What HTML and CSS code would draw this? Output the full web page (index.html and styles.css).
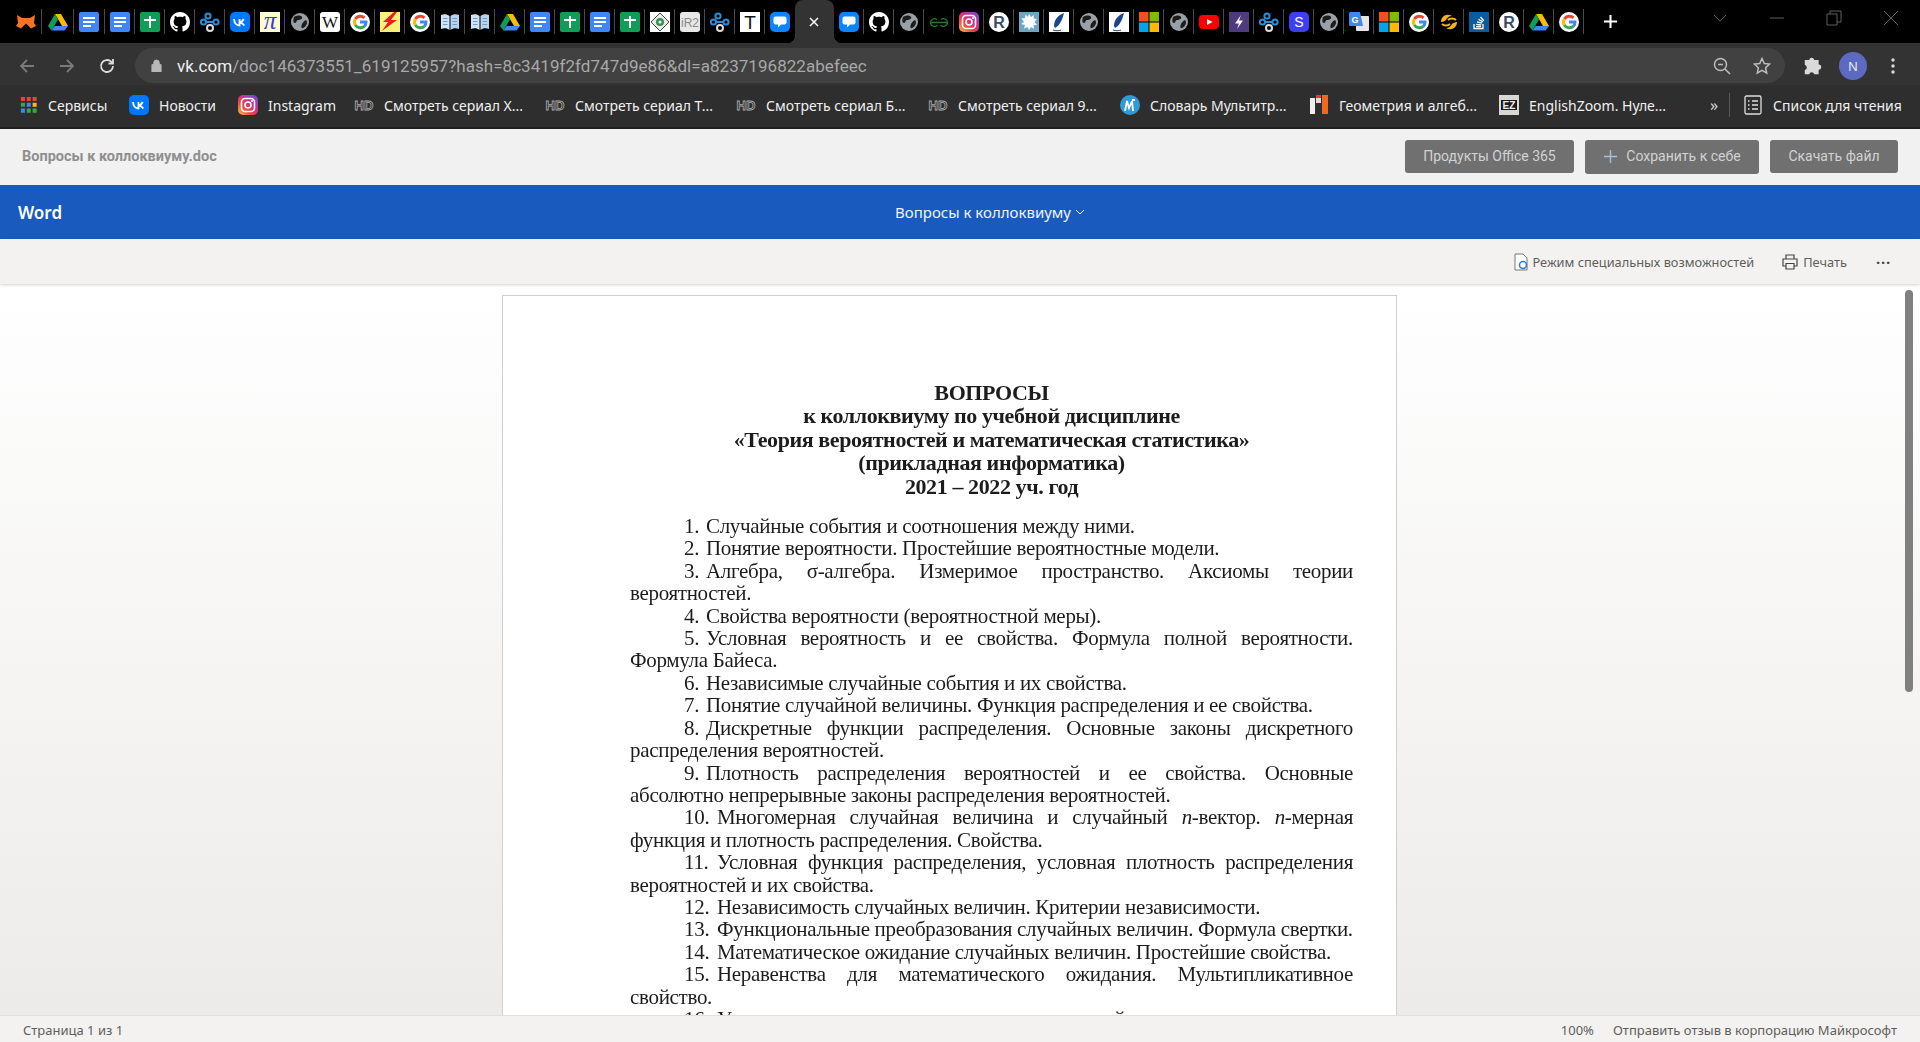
FILE: index.html
```html
<!DOCTYPE html>
<html lang="ru">
<head>
<meta charset="utf-8">
<title>Вопросы к коллоквиуму.doc</title>
<link rel="stylesheet" href="styles.css">
</head>
<body>
<svg class="defs" width="0" height="0" aria-hidden="true">
  <defs>
    <linearGradient id="ig" x1="0" y1="1" x2="1" y2="0">
      <stop offset="0" stop-color="#fdc04f"/><stop offset=".35" stop-color="#f0443e"/><stop offset=".65" stop-color="#c62f9b"/><stop offset="1" stop-color="#5a55d6"/>
    </linearGradient>
    <symbol id="fox" viewBox="0 0 20 20"><path d="M1 3l5 3h8l5-3-1 8 2 3-5 2.500-2.500-2.500h-5L5 16.500 0 14l2-3z" fill="#f5761a"/><path d="M7.500 14L10 11.500l2.500 2.500z" fill="#000"/></symbol>
    <symbol id="drive" viewBox="0 0 20 20"><path d="M7 2h6l7 12h-6z" fill="#fbbc04"/><path d="M7 2l3 5.500L3.500 18.500 0 14z" fill="#0f9d58"/><path d="M6.500 14H20l-3.500 4.500h-13z" fill="#4285f4"/></symbol>
    <symbol id="doc" viewBox="0 0 20 20"><rect width="20" height="20" rx="2" fill="#4285f4"/><path d="M4 5h12v2H4zM4 9h12v2H4zM4 13h8v2H4z" fill="#fff"/></symbol>
    <symbol id="sheet" viewBox="0 0 20 20"><rect width="20" height="20" rx="2" fill="#0f9d58"/><path d="M4 7h12v2H4zM9 4h2v12H9z" fill="#fff"/></symbol>
    <symbol id="github" viewBox="0 0 16 16"><path fill="#fff" d="M8 0C3.58 0 0 3.58 0 8c0 3.540 2.290 6.530 5.470 7.590.4.070.55-.17.55-.38 0-.19-.01-.82-.01-1.490-2.010.37-2.530-.49-2.690-.94-.09-.23-.48-.94-.82-1.130-.28-.15-.68-.52-.01-.53.63-.01 1.080.58 1.230.82.72 1.210 1.870.87 2.330.66.07-.52.28-.87.51-1.070-1.780-.2-3.640-.89-3.640-3.950 0-.87.31-1.590.82-2.150-.08-.2-.36-1.020.08-2.120 0 0 .67-.21 2.200.82.64-.18 1.320-.27 2-.27.68 0 1.360.09 2 .27 1.530-1.040 2.200-.82 2.200-.82.44 1.100.16 1.920.08 2.120.51.56.82 1.270.82 2.150 0 3.070-1.870 3.750-3.650 3.950.29.25.54.73.54 1.480 0 1.070-.01 1.930-.01 2.200 0 .21.15.46.55.38A8.013 8.013 0 0016 8c0-4.420-3.580-8-8-8z"/></symbol>
    <symbol id="links" viewBox="0 0 20 20"><g fill="none" stroke-width="2"><circle cx="8" cy="4" r="2.600" stroke="#2a8fd8"/><circle cx="3.500" cy="10" r="2.600" stroke="#2a8fd8"/><circle cx="16" cy="10" r="2.600" stroke="#2a8fd8"/><path d="M6 10h7.500" stroke="#2a8fd8"/><circle cx="10" cy="16" r="3" stroke="#ddd"/></g></symbol>
    <symbol id="vk" viewBox="0 0 20 20"><rect width="20" height="20" rx="5" fill="#0077ff"/><path d="M4 7c.3 4 2.500 6.500 5.500 6.500V7M9.500 10.300c1.700 0 3.300-1.500 4.200-3.300M9.500 10.300c1.800.2 3.600 1.500 4.800 3.200" fill="none" stroke="#fff" stroke-width="1.800"/></symbol>
    <symbol id="pi" viewBox="0 0 20 20"><rect width="20" height="20" fill="#fdfbd0"/><text x="10" y="17" text-anchor="middle" font-family="Liberation Serif" font-style="italic" font-size="25" fill="#3b3bd8">π</text></symbol>
    <symbol id="globe" viewBox="0 0 20 20"><circle cx="10" cy="10" r="9" fill="#9aa0a6"/><path d="M4 5c3-2 7-2 8 0s-2 3-4 3-1 3-3 3-2-3-1-6zM16 8c2 2 1 6-3 8-2 1-2-2-1-4s2-3 4-4z" fill="#1c1c1c"/></symbol>
    <symbol id="wiki" viewBox="0 0 20 20"><rect width="20" height="20" rx="3" fill="#fff"/><text x="10" y="15.500" text-anchor="middle" font-family="Liberation Serif" font-size="17" fill="#111">W</text></symbol>
    <symbol id="google" viewBox="0 0 20 20"><circle cx="10" cy="10" r="10" fill="#fff"/><g fill="none" stroke-width="3"><path d="M14.500 5.800A6 6 0 0 0 5.300 7" stroke="#ea4335"/><path d="M5.300 7a6 6 0 0 0 0 6" stroke="#fbbc05"/><path d="M5.300 13a6 6 0 0 0 9.200 1.200" stroke="#34a853"/><path d="M14.500 14.200A6 6 0 0 0 16 10H10" stroke="#4285f4"/></g></symbol>
    <symbol id="bolt" viewBox="0 0 20 20"><rect width="20" height="20" fill="#fbf27a"/><path d="M14 0L3 10h5l-6 9 15-11h-6l6-8z" fill="#ee1c25"/></symbol>
    <symbol id="book" viewBox="0 0 20 20"><path d="M1 3c3-1 6-1 8.500 1v14C7 16 4 16 1 17z" fill="#cfe4f7"/><path d="M19 3c-3-1-6-1-8.500 1v14c2.500-2 5.500-2 8.500-1z" fill="#b5d4ef"/><path d="M3 6.500h4.500M3 9.500h4.500M3 12.500h4.500M12.500 6.500H17M12.500 9.500H17M12.500 12.500H17" stroke="#6e9cc6"/></symbol>
    <symbol id="seal" viewBox="0 0 20 20"><rect width="20" height="20" fill="#fff"/><path d="M10 1l9 9-9 9-9-9z" fill="#e8efe8" stroke="#444"/><circle cx="10" cy="10" r="4" fill="#3c8f52"/><circle cx="10" cy="10" r="1.600" fill="#e8efe8"/></symbol>
    <symbol id="ir2" viewBox="0 0 20 20"><rect width="20" height="20" rx="3" fill="#e8e8e8"/><text x="10" y="15" text-anchor="middle" font-family="Liberation Sans" font-size="12" fill="#888">iR2</text></symbol>
    <symbol id="tt" viewBox="0 0 20 20"><rect width="20" height="20" fill="#fff"/><text x="10" y="17" text-anchor="middle" font-family="Liberation Sans" font-size="19" fill="#111">T</text></symbol>
    <symbol id="chat" viewBox="0 0 20 20"><rect width="20" height="20" rx="5" fill="#0a84ff"/><path d="M5.500 4.500h9a2 2 0 0 1 2 2v4a2 2 0 0 1-2 2h-3.500L8 15.500v-3H5.500a2 2 0 0 1-2-2v-4a2 2 0 0 1 2-2z" fill="#fff"/></symbol>
    <symbol id="gfg" viewBox="0 0 20 20"><path d="M10 10.500H1.500a4 4 0 0 1 6.500-3M10 10.500h8.500a4 4 0 0 0-6.500-3M1.500 10.500a4 4 0 0 0 7 2.500M18.500 10.500a4 4 0 0 1-7 2.500" fill="none" stroke="#1f7a34" stroke-width="1.300"/></symbol>
    <symbol id="insta" viewBox="0 0 20 20"><rect width="20" height="20" rx="5" fill="url(#ig)"/><rect x="3.500" y="3.500" width="13" height="13" rx="3.500" fill="none" stroke="#fff" stroke-width="1.600"/><circle cx="10" cy="10" r="3" fill="none" stroke="#fff" stroke-width="1.600"/><circle cx="14" cy="6" r="1" fill="#fff"/></symbol>
    <symbol id="rr" viewBox="0 0 20 20"><circle cx="10" cy="10" r="10" fill="#fff"/><text x="10" y="16" text-anchor="middle" font-family="Liberation Sans" font-weight="700" font-size="16" fill="#3b4a66">R</text></symbol>
    <symbol id="splash" viewBox="0 0 20 20"><rect width="20" height="20" fill="#6fa6c4"/><path d="M10 2l2 3 3-2-.5 3.500L18 7l-2.500 3 2.500 3-3.500.3.500 3.700-3-2-2 3-1.500-3-3.500 1.500 1-3.500L2 12l3-2-2.500-3.500L6 6l.5-3.500L9 5z" fill="#fff"/></symbol>
    <symbol id="quill" viewBox="0 0 20 20"><rect width="20" height="20" fill="#fff"/><path d="M15 1C9 3 5 8 5 14l1 2c4-2 7-7 9-15z" fill="#1c4587"/><path d="M4 18c2 1 6 1 8 0" fill="none" stroke="#1c4587"/></symbol>
    <symbol id="ms" viewBox="0 0 20 20"><path fill="#f25022" d="M0 0h9.500v9.500H0z"/><path fill="#7fba00" d="M10.500 0H20v9.500h-9.500z"/><path fill="#00a4ef" d="M0 10.500h9.500V20H0z"/><path fill="#ffb900" d="M10.500 10.500H20V20h-9.500z"/></symbol>
    <symbol id="yt" viewBox="0 0 20 20"><rect y="3" width="20" height="14" rx="4" fill="#f00"/><path d="M8 7l5.500 3L8 13z" fill="#fff"/></symbol>
    <symbol id="spark" viewBox="0 0 20 20"><rect width="20" height="20" fill="#4f3a7e"/><path d="M12 3l-6 8.500h4L8 17l6-8.500h-4z" fill="#fff"/></symbol>
    <symbol id="ss" viewBox="0 0 20 20"><rect width="20" height="20" rx="5" fill="#3f3ff2"/><text x="10" y="15" text-anchor="middle" font-family="Liberation Sans" font-size="14" fill="#fff">S</text></symbol>
    <symbol id="trans" viewBox="0 0 20 20"><rect x="7" y="4" width="13" height="15" rx="1" fill="#e6e6e6"/><path d="M0 1.500A1.500 1.500 0 0 1 1.500 0H11l3 14H1.500A1.500 1.500 0 0 1 0 12.500z" fill="#4285f4"/><text x="6" y="10.500" text-anchor="middle" font-family="Liberation Sans" font-weight="700" font-size="9" fill="#fff">G</text></symbol>
    <symbol id="swirl" viewBox="0 0 20 20"><path d="M2 10C2 4 8 1 13 4c-3 0-5 2-6 4-1 1-3 2-5 2zM18 10c0 6-6 9-11 6 3 0 5-2 6-4 1-1 3-2 5-2z" fill="#f5b320"/><path d="M9 8c2-2 6-2 8 0M3 12c2 2 6 2 8 0" stroke="#f5b320" stroke-width="2" fill="none"/></symbol>
    <symbol id="stack" viewBox="0 0 20 20"><rect width="20" height="20" fill="#0b5c9e"/><path d="M5 12v4.500h9V12" fill="none" stroke="#fff" stroke-width="1.300"/><path d="M7 14.700h5M7.200 12.400l5 .6M8 9.800l4.900 1.300M9.500 7.300l4.300 2.600M11.500 5l3.300 3.700" stroke="#fff" stroke-width="1.300"/></symbol>
    <symbol id="apps" viewBox="0 0 20 20"><path fill="#ea4335" d="M1 1h4.500v4.500H1zM7.500 1H12v4.500H7.500zM14 1h4.500v4.500H14z"/><path fill="#fbbc05" d="M14 7.500h4.500V12H14z"/><path fill="#34a853" d="M1 7.500h4.500V12H1zM7.500 14H12v4.500H7.500zM14 14h4.500v4.500H14z"/><path fill="#4285f4" d="M7.500 7.500H12V12H7.500zM1 14h4.500v4.500H1z"/></symbol>
    <symbol id="hd" viewBox="0 0 20 20"><text x="10" y="15" text-anchor="middle" font-family="Liberation Sans" font-weight="700" font-size="13" fill="#2d2d2d" stroke="#aaa" stroke-width=".8">HD</text></symbol>
    <symbol id="multitran" viewBox="0 0 20 20"><circle cx="10" cy="10" r="10" fill="#2d9bd8"/><path d="M5 16l2-10 2 7 3-7 1 10M12 5l3 0" fill="none" stroke="#fff" stroke-width="1.800"/></symbol>
    <symbol id="geom" viewBox="0 0 20 20"><rect x="1" y="3" width="5" height="16" fill="#eee"/><rect x="7" y="3" width="5" height="5" fill="#ddd"/><rect x="13" y="0" width="6" height="19" fill="#ef6a20"/><rect x="7" y="0" width="5" height="3" fill="#e33"/></symbol>
    <symbol id="ez" viewBox="0 0 20 20"><rect width="20" height="20" fill="#d9d9d4"/><rect x="2" y="5" width="16" height="10" fill="#1a1a1a"/><text x="10" y="14" text-anchor="middle" font-family="Liberation Sans" font-weight="700" font-size="10" fill="#eee">EZ</text></symbol>
  </defs>
</svg>

<div class="tabstrip">
  <div class="tab tab-a"><svg class="ico"><use href="#fox"/></svg></div>
  <div class="tab tab-a"><svg class="ico"><use href="#drive"/></svg></div>
  <div class="tab tab-b"><svg class="ico"><use href="#doc"/></svg></div>
  <div class="tab"><svg class="ico"><use href="#doc"/></svg></div>
  <div class="tab"><svg class="ico"><use href="#sheet"/></svg></div>
  <div class="tab"><svg class="ico"><use href="#github"/></svg></div>
  <div class="tab"><svg class="ico"><use href="#links"/></svg></div>
  <div class="tab"><svg class="ico"><use href="#vk"/></svg></div>
  <div class="tab"><svg class="ico"><use href="#pi"/></svg></div>
  <div class="tab"><svg class="ico"><use href="#globe"/></svg></div>
  <div class="tab"><svg class="ico"><use href="#wiki"/></svg></div>
  <div class="tab"><svg class="ico"><use href="#google"/></svg></div>
  <div class="tab"><svg class="ico"><use href="#bolt"/></svg></div>
  <div class="tab"><svg class="ico"><use href="#google"/></svg></div>
  <div class="tab"><svg class="ico"><use href="#book"/></svg></div>
  <div class="tab"><svg class="ico"><use href="#book"/></svg></div>
  <div class="tab"><svg class="ico"><use href="#drive"/></svg></div>
  <div class="tab"><svg class="ico"><use href="#doc"/></svg></div>
  <div class="tab"><svg class="ico"><use href="#sheet"/></svg></div>
  <div class="tab"><svg class="ico"><use href="#doc"/></svg></div>
  <div class="tab"><svg class="ico"><use href="#sheet"/></svg></div>
  <div class="tab"><svg class="ico"><use href="#seal"/></svg></div>
  <div class="tab"><svg class="ico"><use href="#ir2"/></svg></div>
  <div class="tab"><svg class="ico"><use href="#links"/></svg></div>
  <div class="tab"><svg class="ico"><use href="#tt"/></svg></div>
  <div class="tab tab-plain"><svg class="ico"><use href="#chat"/></svg></div>
  <div class="tab-active"><svg class="close" viewBox="0 0 12 12"><path d="M2 2l8 8M10 2l-8 8"/></svg></div>
  <div class="tab"><svg class="ico"><use href="#chat"/></svg></div>
  <div class="tab"><svg class="ico"><use href="#github"/></svg></div>
  <div class="tab"><svg class="ico"><use href="#globe"/></svg></div>
  <div class="tab"><svg class="ico"><use href="#gfg"/></svg></div>
  <div class="tab"><svg class="ico"><use href="#insta"/></svg></div>
  <div class="tab"><svg class="ico"><use href="#rr"/></svg></div>
  <div class="tab"><svg class="ico"><use href="#splash"/></svg></div>
  <div class="tab"><svg class="ico"><use href="#quill"/></svg></div>
  <div class="tab"><svg class="ico"><use href="#globe"/></svg></div>
  <div class="tab"><svg class="ico"><use href="#quill"/></svg></div>
  <div class="tab"><svg class="ico"><use href="#ms"/></svg></div>
  <div class="tab"><svg class="ico"><use href="#globe"/></svg></div>
  <div class="tab"><svg class="ico"><use href="#yt"/></svg></div>
  <div class="tab"><svg class="ico"><use href="#spark"/></svg></div>
  <div class="tab"><svg class="ico"><use href="#links"/></svg></div>
  <div class="tab"><svg class="ico"><use href="#ss"/></svg></div>
  <div class="tab"><svg class="ico"><use href="#globe"/></svg></div>
  <div class="tab"><svg class="ico"><use href="#trans"/></svg></div>
  <div class="tab"><svg class="ico"><use href="#ms"/></svg></div>
  <div class="tab"><svg class="ico"><use href="#google"/></svg></div>
  <div class="tab"><svg class="ico"><use href="#swirl"/></svg></div>
  <div class="tab"><svg class="ico"><use href="#stack"/></svg></div>
  <div class="tab"><svg class="ico"><use href="#rr"/></svg></div>
  <div class="tab"><svg class="ico"><use href="#drive"/></svg></div>
  <div class="tab"><svg class="ico"><use href="#google"/></svg></div>
  <svg class="newtab" viewBox="0 0 16 16"><path d="M8 1v14M1 8h14"/></svg>
  <div class="winctl">
    <svg class="win" viewBox="0 0 16 16"><path d="M2 5l6 6 6-6"/></svg>
    <svg class="win" viewBox="0 0 16 16"><path d="M1 8h14"/></svg>
    <svg class="win" viewBox="0 0 16 16"><path d="M1 4h10v11H1zM4 4V1h11v11h-4"/></svg>
    <svg class="win" viewBox="0 0 16 16"><path d="M1 1l14 14M15 1L1 15"/></svg>
  </div>
</div>

<div class="toolbar">
  <div class="navbtn"><svg class="navico dim" viewBox="0 0 16 16"><path d="M15 8H2M8 2L2 8l6 6"/></svg></div>
  <div class="navbtn"><svg class="navico dim" viewBox="0 0 16 16"><path d="M1 8h13M8 2l6 6-6 6"/></svg></div>
  <div class="navbtn"><svg class="navico" viewBox="0 0 16 16"><path d="M14 8a6 6 0 1 1-1.800-4.300L14 5.500M14 1v4.500H9.500"/></svg></div>
  <div class="omnibox">
    <svg class="lock" viewBox="0 0 12 14"><path d="M1 6h10v8H1zM3 6V4a3 3 0 0 1 6 0v2" /></svg>
    <span class="url"><span class="host">vk.com</span>/doc146373551_619125957?hash=8c3419f2fd747d9e86&amp;dl=a8237196822abefeec</span>
    <svg class="omni-ico" viewBox="0 0 18 18"><circle cx="7.500" cy="7.500" r="6"/><path d="M12 12l5 5M5 7.500h5"/></svg>
    <svg class="omni-ico star" viewBox="0 0 18 18"><path d="M9 1.500l2.300 5 5.200.6-3.900 3.600 1.100 5.300L9 13.300 4.300 16l1.100-5.300L1.500 7.100l5.200-.6z"/></svg>
  </div>
  <div class="navbtn"><svg class="puzzle" viewBox="0 0 18 18"><path d="M6.500 3.500a2.300 2.300 0 0 1 4.500 0h4v4.200a2.300 2.300 0 0 1 0 4.600V16.500H11a2.300 2.300 0 0 0-4.500 0H2.500v-4a2.300 2.300 0 0 0 0-4.500v-4.500z"/></svg></div>
  <div class="navbtn"><span class="avatar">N</span></div>
  <div class="navbtn"><svg class="kebab" viewBox="0 0 4 16"><circle cx="2" cy="2" r="1.700"/><circle cx="2" cy="8" r="1.700"/><circle cx="2" cy="14" r="1.700"/></svg></div>
</div>

<div class="bookmarks">
  <div class="bm"><svg class="ico ico-sm"><use href="#apps"/></svg><span>Сервисы</span></div>
  <div class="bm"><svg class="ico"><use href="#vk"/></svg><span>Новости</span></div>
  <div class="bm"><svg class="ico"><use href="#insta"/></svg><span>Instagram</span></div>
  <div class="bm"><svg class="ico"><use href="#hd"/></svg><span>Смотреть сериал Х...</span></div>
  <div class="bm"><svg class="ico"><use href="#hd"/></svg><span>Смотреть сериал Т...</span></div>
  <div class="bm"><svg class="ico"><use href="#hd"/></svg><span>Смотреть сериал Б...</span></div>
  <div class="bm"><svg class="ico"><use href="#hd"/></svg><span>Смотреть сериал 9...</span></div>
  <div class="bm"><svg class="ico"><use href="#multitran"/></svg><span>Словарь Мультитр...</span></div>
  <div class="bm"><svg class="ico"><use href="#geom"/></svg><span>Геометрия и алгеб...</span></div>
  <div class="bm"><svg class="ico"><use href="#ez"/></svg><span>EnglishZoom. Нуле...</span></div>
  <div class="more">»</div>
  <div class="readlist"><svg class="listico" viewBox="0 0 18 20"><rect x="1" y="1" width="16" height="18" rx="1.500"/><path d="M4 6h1.500M8 6h6M4 10h1.500M8 10h6M4 14h1.500M8 14h6"/></svg><span>Список для чтения</span></div>
</div>

<div class="docbar">
  <div class="docname">Вопросы к коллоквиуму.doc</div>
  <div class="docbtns">
    <div class="btn btn-office">Продукты Office 365</div>
    <div class="btn btn-save"><svg class="plus" viewBox="0 0 16 16"><path d="M8 1v14M1 8h14"/></svg>Сохранить к себе</div>
    <div class="btn btn-dl">Скачать файл</div>
  </div>
</div>

<div class="wordbar">
  <div class="wordlogo">Word</div>
  <div class="wordtitle">Вопросы к коллоквиуму<svg class="chev" viewBox="0 0 12 12"><path d="M2 4l4 4 4-4"/></svg></div>
</div>

<div class="wordtools">
  <div class="wt"><svg class="wt-acc" viewBox="0 0 14 18"><path d="M1 1h8l4 4v12H1z"/><circle cx="9" cy="12" r="3.500" class="acc"/></svg><span>Режим специальных возможностей</span></div>
  <div class="wt wt-print"><svg class="wt-prn" viewBox="0 0 16 16"><path d="M4 5V1h8v4M4 12H1V5h14v7h-3M4 9.500h8V15H4z"/></svg><span>Печать</span></div>
  <div class="dots">···</div>
</div>

<div class="viewer">
  <div class="page">
    <div class="title">
      <div>ВОПРОСЫ</div>
      <div>к коллоквиуму по учебной дисциплине</div>
      <div>«Теория вероятностей и математическая статистика»</div>
      <div>(прикладная информатика)</div>
      <div>2021 – 2022 уч. год</div>
    </div>
    <p class="q"><span class="n">1.</span>Случайные события и соотношения между ними.</p>
    <p class="q"><span class="n">2.</span>Понятие вероятности. Простейшие вероятностные модели.</p>
    <p class="q"><span class="j"><span class="n">3.</span>Алгебра, σ-алгебра. Измеримое пространство. Аксиомы теории</span><span class="c">вероятностей.</span></p>
    <p class="q"><span class="n">4.</span>Свойства вероятности (вероятностной меры).</p>
    <p class="q"><span class="j"><span class="n">5.</span>Условная вероятность и ее свойства. Формула полной вероятности.</span><span class="c">Формула Байеса.</span></p>
    <p class="q"><span class="n">6.</span>Независимые случайные события и их свойства.</p>
    <p class="q"><span class="n">7.</span>Понятие случайной величины. Функция распределения и ее свойства.</p>
    <p class="q"><span class="j"><span class="n">8.</span>Дискретные функции распределения. Основные законы дискретного</span><span class="c">распределения вероятностей.</span></p>
    <p class="q"><span class="j"><span class="n">9.</span>Плотность распределения вероятностей и ее свойства. Основные</span><span class="c">абсолютно непрерывные законы распределения вероятностей.</span></p>
    <p class="q"><span class="j"><span class="n n2">10.</span>Многомерная случайная величина и случайный <i>n</i>-вектор. <i>n</i>-мерная</span><span class="c">функция и плотность распределения. Свойства.</span></p>
    <p class="q"><span class="j"><span class="n n2">11.</span>Условная функция распределения, условная плотность распределения</span><span class="c">вероятностей и их свойства.</span></p>
    <p class="q"><span class="n n2">12.</span>Независимость случайных величин. Критерии независимости.</p>
    <p class="q"><span class="n n2">13.</span>Функциональные преобразования случайных величин. Формула свертки.</p>
    <p class="q"><span class="n n2">14.</span>Математическое ожидание случайных величин. Простейшие свойства.</p>
    <p class="q"><span class="j"><span class="n n2">15.</span>Неравенства для математического ожидания. Мультипликативное</span><span class="c">свойство.</span></p>
    <p class="q q-last"><span class="n n2">16.</span>Условное математическое ожидание случайных величин.</p>
  </div>
  <div class="thumb"></div>
</div>

<div class="status">
  <div>Страница 1 из 1</div>
  <div class="status-right"><span>100%</span><span>Отправить отзыв в корпорацию Майкрософт</span></div>
</div>
</body>
</html>
```
FILE: styles.css
```css
* { box-sizing: border-box; }
html, body { margin: 0; padding: 0; }
body {
  width: 1920px;
  height: 1042px;
  overflow: hidden;
  display: flex;
  flex-direction: column;
  font-family: "Noto Sans", sans-serif;
  background: #fff;
}
.defs { display: block; height: 0; }
.ico { width: 20px; height: 20px; flex: none; display: block; }
.ico-sm { width: 18px; height: 18px; }

/* Tab strip */
.tabstrip {
  height: 43px;
  flex: none;
  background: #000;
  display: flex;
  align-items: flex-start;
  padding-left: 10px;
}
.tab {
  width: 30px;
  height: 25px;
  margin-top: 9px;
  flex: none;
  display: flex;
  align-items: center;
  justify-content: center;
  border-right: 1px solid #4a4a4a;
}
.tab-a { width: 32px; }
.tab-b { width: 31px; }
.tab-plain { border-right: 0; }
.tab-active {
  width: 39px;
  height: 43px;
  flex: none;
  position: relative;
  background: #333;
  border-radius: 8px 8px 0 0;
  display: flex;
  align-items: center;
  justify-content: center;
  padding-right: 2px;
}
.tab-active::before,
.tab-active::after {
  content: "";
  position: absolute;
  bottom: 0;
  width: 8px;
  height: 8px;
}
.tab-active::before { left: -8px; background: radial-gradient(circle at 0 0, transparent 8px, #333 8.5px); }
.tab-active::after { right: -8px; background: radial-gradient(circle at 100% 0, transparent 8px, #333 8.5px); }
.close { width: 12px; height: 12px; fill: none; stroke: #fff; stroke-width: 1.500; }
.newtab { width: 15px; height: 15px; margin: 14px 0 0 19px; fill: none; stroke: #fff; stroke-width: 2.200; flex: none; }
.winctl { margin-left: auto; display: flex; padding: 10px 21px 0 0; gap: 41px; }
.win { width: 16px; height: 16px; fill: none; stroke: #5f5f5f; stroke-width: 1; }

/* Toolbar */
.toolbar {
  height: 42px;
  flex: none;
  background: #333;
  display: flex;
  align-items: flex-start;
  padding: 5px 7px 0;
}
.navbtn { width: 40px; height: 35px; flex: none; display: flex; align-items: center; justify-content: center; }
.navico { width: 16px; height: 16px; fill: none; stroke: #dcdcdc; stroke-width: 1.800; }
.navico.dim { stroke: #7a7a7a; }
.omnibox {
  width: 1650px;
  height: 35px;
  flex: none;
  margin: 0 8px;
  background: #414141;
  border-radius: 18px;
  display: flex;
  align-items: center;
  padding: 0 14px 0 16px;
  color: #a8a8a8;
}
.lock { width: 11px; height: 13px; flex: none; fill: #b8b8b8; stroke: #b8b8b8; stroke-width: 1; margin-right: 15px; }
.lock path { fill-rule: evenodd; }
.url { font-family: "Roboto", sans-serif; font-size: 17px; letter-spacing: .05px; white-space: nowrap; flex: 1; }
.host { color: #f0f0f0; }
.omni-ico { width: 18px; height: 18px; flex: none; fill: none; stroke: #bdbdbd; stroke-width: 1.500; margin-left: 22px; }
.star { margin-left: 22px; }
.puzzle { width: 20px; height: 20px; fill: #dadada; margin-right: 2px; }
.avatar {
  width: 28px;
  height: 28px;
  border-radius: 50%;
  background: #5c6bc0;
  color: #e8eaf6;
  font-size: 13px;
  display: flex;
  align-items: center;
  justify-content: center;
}
.kebab { width: 4px; height: 16px; fill: #dadada; }

/* Bookmarks */
.bookmarks {
  height: 44px;
  flex: none;
  background: #2e2e2e;
  border-bottom: 2px solid #1e1e1e;
  display: grid;
  grid-template-columns: 109px 109px 116px 191px 191px 192px 192px 189px 190px 211px 19px 1fr;
  align-items: center;
  padding: 0 0 2px 20px;
  color: #f0f0f0;
  font-size: 14px;
}
.bm { display: flex; align-items: center; gap: 10px; white-space: nowrap; overflow: hidden; }
.more { font-size: 16px; line-height: 16px; color: #d8d8d8; }
.readlist {
  display: flex;
  align-items: center;
  border-left: 1px solid #5a5a5a;
  height: 24px;
  padding-left: 14px;
  gap: 11px;
  white-space: nowrap;
}
.listico { width: 18px; height: 20px; fill: none; stroke: #dedede; stroke-width: 1.300; flex: none; }

/* Document bar */
.docbar {
  height: 56px;
  flex: none;
  background: #f1f1f1;
  display: flex;
  align-items: center;
  justify-content: space-between;
  padding: 0 22px 0 22px;
  font-family: "Roboto", sans-serif;
}
.docname { font-weight: 700; font-size: 14.5px; color: #8f8f8f; padding-bottom: 2px; }
.docbtns { display: flex; gap: 11px; }
.btn {
  height: 33px;
  background: #707070;
  border-radius: 3px;
  color: #d2d2d2;
  font-size: 14px;
  display: flex;
  align-items: center;
  justify-content: center;
  white-space: nowrap;
  padding-bottom: 2px;
}
.btn-office { width: 169px; }
.btn-save { width: 174px; height: 34px; gap: 8px; }
.btn-dl { width: 128px; }
.plus { width: 15px; height: 15px; fill: none; stroke: #a9bfd2; stroke-width: 1.500; }

/* Word bar */
.wordbar {
  height: 54px;
  flex: none;
  background: #185abd;
  display: flex;
  align-items: center;
  position: relative;
  color: #fff;
  padding-left: 18px;
}
.wordlogo { font-size: 17px; font-weight: 600; }
.wordtitle {
  margin-left: 833px;
  font-size: 15px;
  display: flex;
  align-items: center;
  gap: 3px;
  color: #f0f4fb;
}
.chev { width: 12px; height: 12px; fill: none; stroke: #f0f4fb; stroke-width: 1; }

/* Word toolbar */
.wordtools {
  height: 45px;
  flex: none;
  background: #f3f2f1;
  box-shadow: 0 1px 3px rgba(0, 0, 0, .18);
  position: relative;
  z-index: 2;
  display: flex;
  align-items: center;
  justify-content: flex-end;
  padding-right: 29px;
  color: #605e5c;
  font-size: 12.8px;
}
.wt { display: flex; align-items: center; gap: 4px; white-space: nowrap; }
.wt-print { margin-left: 28px; gap: 5px; }
.wt-acc { width: 14px; height: 18px; fill: #fff; stroke: #777; stroke-width: 1; }
.wt-acc .acc { fill: none; stroke: #2b7cd3; stroke-width: 1.500; }
.wt-prn { width: 16px; height: 16px; fill: none; stroke: #444; stroke-width: 1.200; }
.dots { margin-left: 29px; font-size: 15px; font-weight: 700; color: #444; letter-spacing: .8px; }

/* Viewer */
.viewer {
  flex: 1;
  min-height: 0;
  overflow: hidden;
  position: relative;
  background: linear-gradient(#fff, #edebe9);
  padding: 11px 0 0 502px;
}
.page {
  width: 895px;
  height: 900px;
  background: #fff;
  border: 1px solid #cfcfcf;
  padding: 85px 43px 0 127px;
  color: #1c1c1c;
  font-family: "Liberation Serif", serif;
  font-size: 21px;
  line-height: 22.4px;
  filter: blur(.35px);
}
.title { font-weight: 700; text-align: center; line-height: 23.4px; font-size: 22px; letter-spacing: -.4px; margin-bottom: 17px; }
.q { margin: 0; text-indent: 54px; letter-spacing: -.31px; }
.q-last { word-spacing: 10px; }
.n { display: inline-block; width: 22px; text-indent: 0; }
.n2 { width: 33px; }
.j { display: block; text-align: justify; text-align-last: justify; }
.c { display: block; text-indent: 0; }
.thumb {
  position: absolute;
  left: 1905px;
  top: 6px;
  width: 8px;
  height: 402px;
  border-radius: 4px;
  background: #808080;
}

/* Status */
.status {
  height: 27px;
  flex: none;
  background: #f3f2f1;
  border-top: 1px solid #e1dfdd;
  display: flex;
  align-items: center;
  justify-content: space-between;
  padding: 2px 23px 0;
  color: #605e5c;
  font-size: 13px;
}
.status-right { display: flex; gap: 19px; }
```
